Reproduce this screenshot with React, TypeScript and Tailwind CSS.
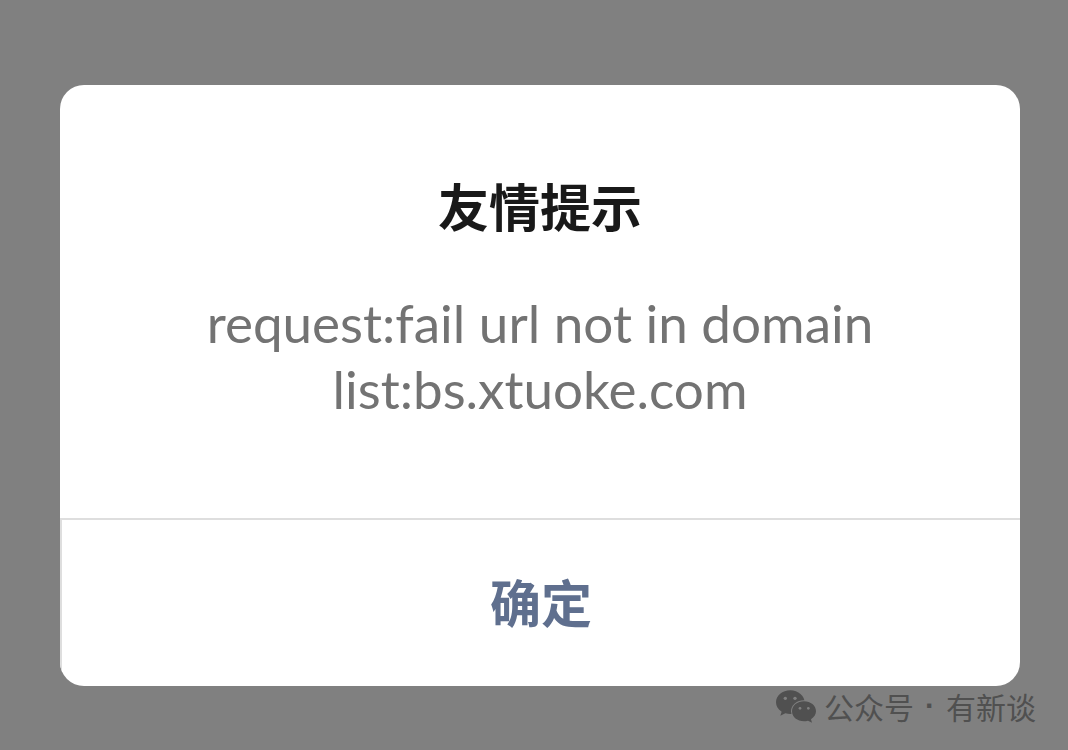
import { useState } from 'react'

const MESSAGE = 'request:fail url not in domain list:bs.xtuoke.com'

function WechatIcon() {
  return (
    <svg viewBox="0 0 120 99" className="h-[33px] w-10" fill="currentColor" aria-hidden="true">
      <mask id="big-bubble">
        <rect width="120" height="99" fill="white" />
        <circle cx="28" cy="25" r="5" fill="black" />
        <circle cx="57" cy="25" r="5" fill="black" />
        <ellipse cx="84" cy="64" rx="39" ry="33" fill="black" />
      </mask>
      <mask id="small-bubble">
        <rect width="120" height="99" fill="white" />
        <circle cx="72" cy="55" r="4" fill="black" />
        <circle cx="97" cy="55" r="4" fill="black" />
      </mask>
      <path
        mask="url(#big-bubble)"
        d="M43 1C19 1 0 17 0 37c0 12 6 21 17 28l-4 12 15-7c5 1 10 2 15 2 24 0 43-16 43-35S67 1 43 1z"
      />
      <path
        mask="url(#small-bubble)"
        d="M84 34c-20 0-36 13-36 30s16 30 36 30c4 0 8-1 12-2l12 6-3-10c9-6 15-14 15-24 0-17-16-30-36-30z"
      />
    </svg>
  )
}

function Watermark() {
  return (
    <div className="-mr-4 flex items-center justify-end gap-2 text-[#505050]">
      <WechatIcon />
      <span className="flex text-[30px] leading-10">
        公众号
        <span className="w-8 text-center font-['Liberation_Sans',sans-serif] font-bold">·</span>
        有新谈
      </span>
    </div>
  )
}

export default function App() {
  const [confirmed, setConfirmed] = useState(false)

  return (
    <div className="min-h-screen bg-[#808080] pt-[85px] pr-12 pl-[60px] font-['Noto_Sans_CJK_SC',sans-serif]">
      {/* Dialog */}
      <div
        role="alertdialog"
        aria-labelledby="dialog-title"
        aria-describedby="dialog-message"
        className="overflow-hidden rounded-3xl bg-white text-center"
      >
        <div className="px-24 pt-[88px] pb-24">
          <h1 id="dialog-title" className="text-[51px] leading-16 font-bold text-[#191919]">
            友情提示
          </h1>
          <p
            id="dialog-message"
            className="mx-auto mt-[53px] max-w-[760px] font-['Lato',sans-serif] text-[53px] leading-[66px] text-[#737373]"
          >
            {MESSAGE}
          </p>
        </div>
        <button
          type="button"
          aria-pressed={confirmed}
          onClick={() => setConfirmed(true)}
          className="h-[168px] w-full border-t-2 border-l-2 border-[#dedede] pb-1 text-[51px] font-bold text-[#5f6f8e]"
        >
          确定
        </button>
      </div>

      <Watermark />
    </div>
  )
}
